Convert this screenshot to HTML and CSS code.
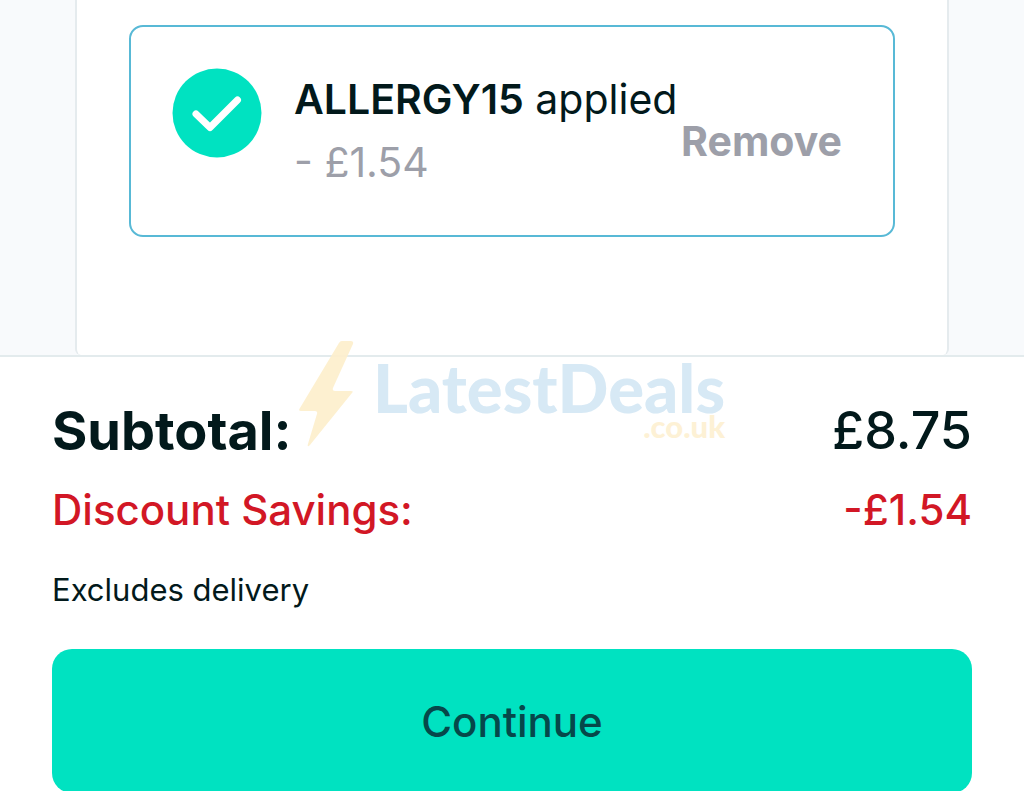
FILE: index.html
```
<!DOCTYPE html>
<html lang="en">
<head>
    <meta charset="UTF-8">
    <meta name="viewport" content="width=device-width, initial-scale=1.0">
    <title>Basket</title>
    <link rel="stylesheet" href="styles.css">
</head>
<body>
    <main class="basket">
        <div class="panel">
            <div class="voucher">
                <svg class="tick" viewBox="0 0 90 90" aria-hidden="true">
                    <circle cx="45" cy="45" r="44.5" fill="#00e2c1"/>
                    <path d="M24 46l14 13.500 27.500-27.500" fill="none" stroke="#fff" stroke-width="7" stroke-linecap="round" stroke-linejoin="round"/>
                </svg>
                <div class="voucher-text">
                    <p><strong>ALLERGY15</strong> applied</p>
                    <p class="amount">- £1.54</p>
                </div>
                <button type="button" class="remove">Remove</button>
            </div>
        </div>
    </main>
    <section class="summary">
        <div class="row subtotal">
            <h2>Subtotal:</h2>
            <span>£8.75</span>
        </div>
        <div class="row discount">
            <span>Discount Savings:</span>
            <span>-£1.54</span>
        </div>
        <p class="note">Excludes delivery</p>
        <button type="button" class="continue">Continue</button>
        <div class="watermark">
            <svg class="bolt" viewBox="0 0 56 106" aria-hidden="true">
                <path d="M40 2q1-2 3-2h9q3 0 2 3L34 47q-1 3 2 3h16q3 0 1 2L11 104q-3 3-2-1L18 73q1-3-2-3H2q-3 0-1-3z" fill="#fdeecb" fill-opacity="0.9"/>
            </svg>
            <div class="brand">
                <span class="brand-name">LatestDeals</span>
                <span class="brand-domain">.co.uk</span>
            </div>
        </div>
    </section>
</body>
</html>
```

FILE: styles.css
```
* {
    box-sizing: border-box;
}
body {
    margin: 0;
    min-height: 100vh;
    overflow: hidden;
    font-family: Inter, "Liberation Sans", sans-serif;
    color: #02191b;
    background-color: #fff;
}
h2, p {
    margin: 0;
}
button {
    border: none;
    font-family: inherit;
    cursor: pointer;
}
.basket {
    padding: 0 75px;
    background-color: #f8fafc;
}
.panel {
    height: 355px;
    padding: 25px 52px 0;
    background-color: #fff;
    border: 2px solid #e5ebee;
    border-top: none;
    border-bottom: none;
    border-radius: 0 0 6px 6px;
}
.voucher {
    display: flex;
    align-items: flex-start;
    height: 212px;
    padding: 41px 51px 0 41px;
    border: 2px solid #58b9d6;
    border-radius: 14px;
}
.tick {
    width: 90px;
    height: 90px;
    flex-shrink: 0;
}
.voucher-text {
    margin-left: 32px;
    font-size: 41px;
    line-height: 63px;
    white-space: nowrap;
}
.voucher-text strong {
    font-weight: 600;
}
.voucher-text .amount {
    color: #9d9fa9;
}
.remove {
    margin: 47px 0 0 auto;
    padding: 0;
    background: none;
    color: #9d9fa9;
    font-size: 41px;
    font-weight: 700;
    line-height: 52px;
}
.summary {
    position: relative;
    padding: 39px 52px 0;
    background-color: #fff;
    border-top: 2px solid #e3ebed;
}
.row {
    display: flex;
    justify-content: space-between;
    align-items: center;
}
.subtotal {
    height: 68px;
    font-size: 52px;
    font-weight: 500;
}
.subtotal h2 {
    font-size: 54px;
    font-weight: 700;
}
.discount {
    height: 90px;
    color: #d21725;
    font-size: 42px;
    font-weight: 500;
}
.note {
    font-size: 31px;
    line-height: 72px;
}
.continue {
    display: block;
    width: 100%;
    height: 144px;
    margin-top: 23px;
    background-color: #00e2c1;
    border-radius: 20px;
    color: #06484a;
    font-size: 42px;
    font-weight: 500;
}
.watermark {
    position: absolute;
    top: -16px;
    left: 50%;
    display: flex;
    gap: 18px;
    transform: translateX(-50%);
    pointer-events: none;
}
.bolt {
    width: 56px;
    height: 106px;
}
.brand {
    display: flex;
    flex-direction: column;
    font-family: Lato, sans-serif;
    font-weight: 900;
}
.brand-name {
    margin-top: 14px;
    color: #d7e9f5;
    font-size: 67px;
    line-height: 64px;
}
.brand-domain {
    align-self: flex-end;
    color: #fdf1d5;
    font-size: 31px;
    line-height: 14px;
}
```
